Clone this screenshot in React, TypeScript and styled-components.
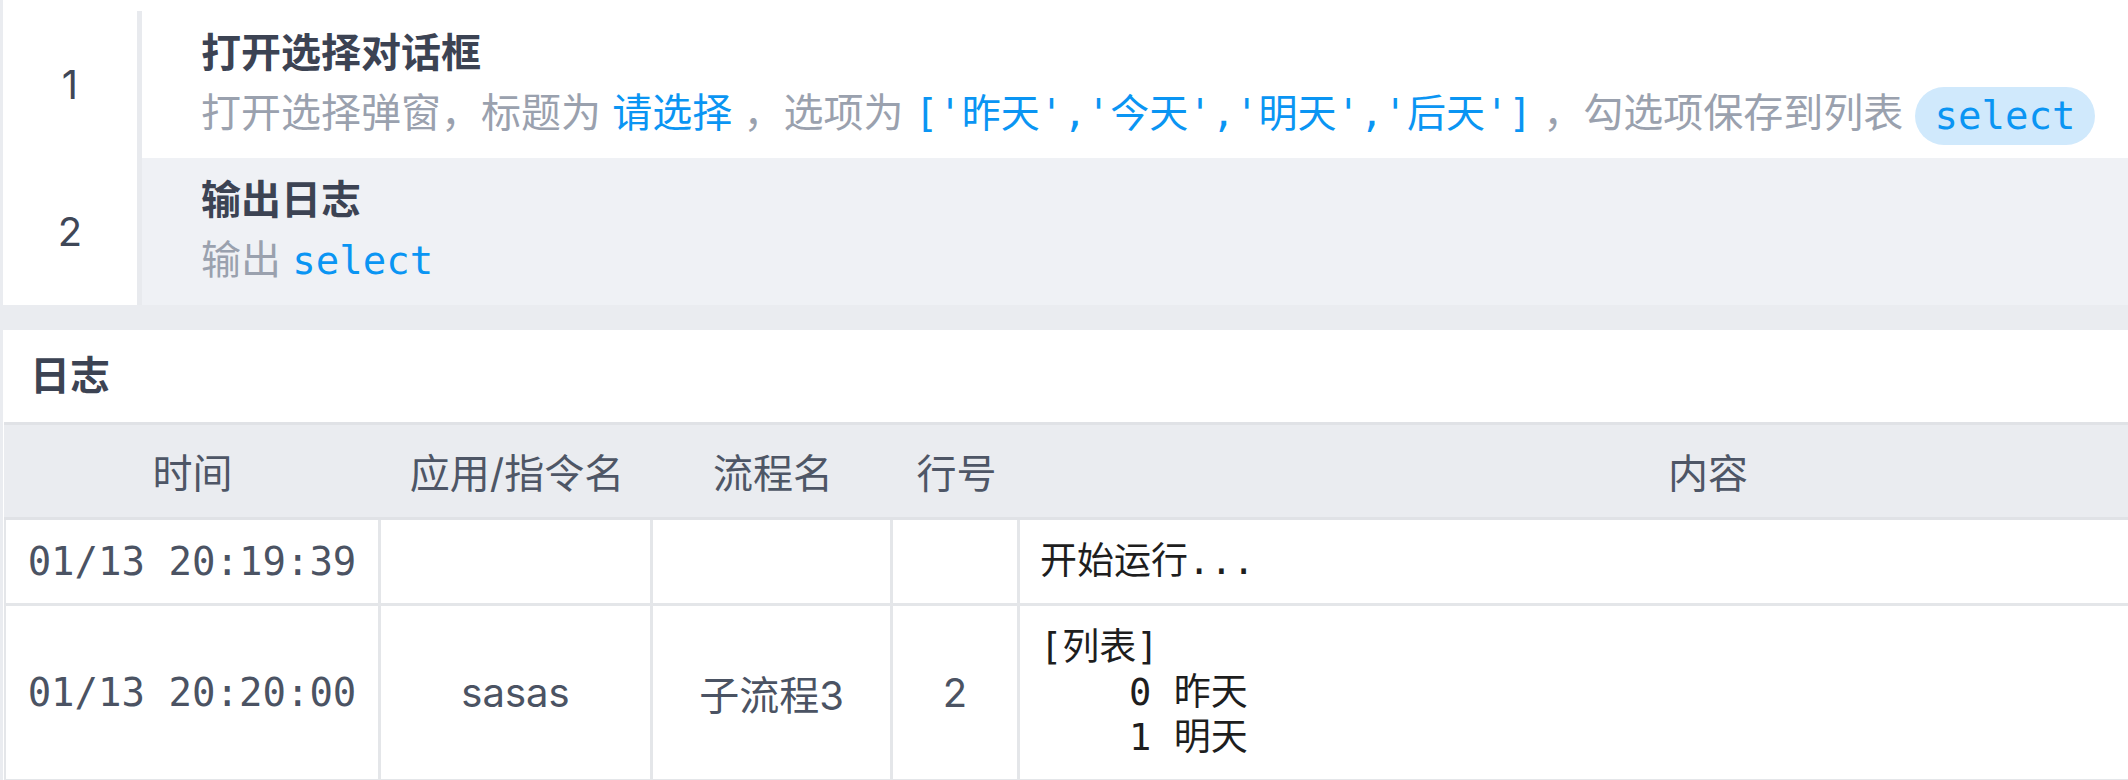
import React from 'react';
import styled, { createGlobalStyle } from 'styled-components';

const GlobalStyle = createGlobalStyle`
  html, body {
    margin: 0;
    padding: 0;
    background: #eaecf0;
    overflow: hidden;
  }
  body {
    font-family: "Inter", "Noto Sans CJK SC", sans-serif;
  }
`;

const SANS = `"Inter", "Noto Sans CJK SC", sans-serif`;
const MONO = `"DejaVu Sans Mono", "Noto Sans CJK SC", monospace`;

const Page = styled.div`
  width: 2128px;
  padding-left: 3px;
  box-sizing: border-box;
`;

const FlowPanel = styled.div`
  background: #fff;
  padding-top: 11px;
`;

const StepRow = styled.div`
  display: flex;
  height: 147px;
`;

const StepIndex = styled.div`
  width: 134px;
  flex-shrink: 0;
  display: flex;
  align-items: center;
  justify-content: center;
  font-family: ${SANS};
  font-size: 40px;
  color: #3f4757;
`;

const StepBody = styled.div<{ $active: boolean }>`
  flex: 1;
  min-width: 0;
  border-left: 5px solid #e8eaee;
  padding: 12px 0 15px 59px;
  background: ${props => props.$active ? '#eff1f5' : '#fff'};
  box-sizing: border-box;
`;

const StepTitle = styled.div`
  font-family: ${SANS};
  font-weight: 700;
  font-size: 40px;
  line-height: 60px;
  color: #3c4353;
`;

const StepDesc = styled.div`
  font-family: ${SANS};
  font-size: 40px;
  line-height: 60px;
  color: #9aa1ae;
  white-space: nowrap;
`;

const Value = styled.span`
  color: #0a95f3;
`;

const CodeValue = styled.span`
  color: #0a95f3;
  font-family: ${MONO};
  font-size: 39px;
`;

const VarChip = styled.span`
  display: inline-block;
  height: 58px;
  line-height: 58px;
  padding: 0 20px;
  border-radius: 29px;
  background: #d0e9fc;
  color: #0a95f3;
  font-family: ${MONO};
  font-size: 39px;
  vertical-align: middle;
`;

const LogPanel = styled.div`
  margin-top: 25px;
  background: #fff;
  overflow: hidden;
  height: 500px;
`;

const LogTitle = styled.div`
  height: 92px;
  line-height: 92px;
  padding-left: 27px;
  font-family: ${SANS};
  font-weight: 700;
  font-size: 40px;
  color: #3c4353;
`;

const LogGrid = styled.div`
  display: grid;
  grid-template-columns: 377px 272px 240px 127px 1376px;
  width: max-content;
  margin-left: 1px;
`;

const HeadCell = styled.div`
  height: 98px;
  box-sizing: border-box;
  display: flex;
  align-items: center;
  justify-content: center;
  background: #eaecf0;
  border-top: 3px solid #e0e2e6;
  border-bottom: 3px solid #e0e2e6;
  font-family: ${SANS};
  font-size: 40px;
  color: #4e5666;
`;

const BodyCell = styled.div<{ $first?: boolean; $mono?: boolean }>`
  box-sizing: border-box;
  display: flex;
  align-items: center;
  justify-content: center;
  border-right: 3px solid #e4e6e9;
  border-bottom: 3px solid #e4e6e9;
  border-left: ${props => props.$first ? '2px solid #e4e6e9' : 'none'};
  font-family: ${props => props.$mono ? MONO : SANS};
  font-size: ${props => props.$mono ? '39px' : '40px'};
  color: #4b5363;
`;

const ContentCell = styled.div`
  box-sizing: border-box;
  padding: 19px 20px;
  border-right: 3px solid #e4e6e9;
  border-bottom: 3px solid #e4e6e9;
  font-family: ${MONO};
  font-size: 37px;
  line-height: 45px;
  color: #1e1e1e;
  white-space: pre;
`;

interface LogEntry {
  time: string;
  app: string;
  flow: string;
  line: string;
  content: string;
}

const logs: LogEntry[] = [
  { time: '01/13 20:19:39', app: '', flow: '', line: '', content: '开始运行...' },
  { time: '01/13 20:20:00', app: 'sasas', flow: '子流程3', line: '2', content: '[列表]\n    0 昨天\n    1 明天' },
];

const headers = ['时间', '应用/指令名', '流程名', '行号', '内容'];

export default function App() {
  return (
    <>
      <GlobalStyle />
      <Page>
        <FlowPanel>
          <StepRow>
            <StepIndex>1</StepIndex>
            <StepBody $active={false}>
              <StepTitle>打开选择对话框</StepTitle>
              <StepDesc>
                打开选择弹窗，标题为 <Value>请选择</Value> ，选项为 <CodeValue>['昨天','今天','明天','后天']</CodeValue> ，勾选项保存到列表 <VarChip>select</VarChip>
              </StepDesc>
            </StepBody>
          </StepRow>
          <StepRow>
            <StepIndex>2</StepIndex>
            <StepBody $active={true}>
              <StepTitle>输出日志</StepTitle>
              <StepDesc>
                输出 <CodeValue>select</CodeValue>
              </StepDesc>
            </StepBody>
          </StepRow>
        </FlowPanel>

        <LogPanel>
          <LogTitle>日志</LogTitle>
          <LogGrid>
            {headers.map(h => (
              <HeadCell key={h}>{h}</HeadCell>
            ))}
            {logs.map((log, i) => (
              <React.Fragment key={i}>
                <BodyCell $first $mono>{log.time}</BodyCell>
                <BodyCell>{log.app}</BodyCell>
                <BodyCell>{log.flow}</BodyCell>
                <BodyCell>{log.line}</BodyCell>
                <ContentCell>{log.content}</ContentCell>
              </React.Fragment>
            ))}
          </LogGrid>
        </LogPanel>
      </Page>
    </>
  );
}
